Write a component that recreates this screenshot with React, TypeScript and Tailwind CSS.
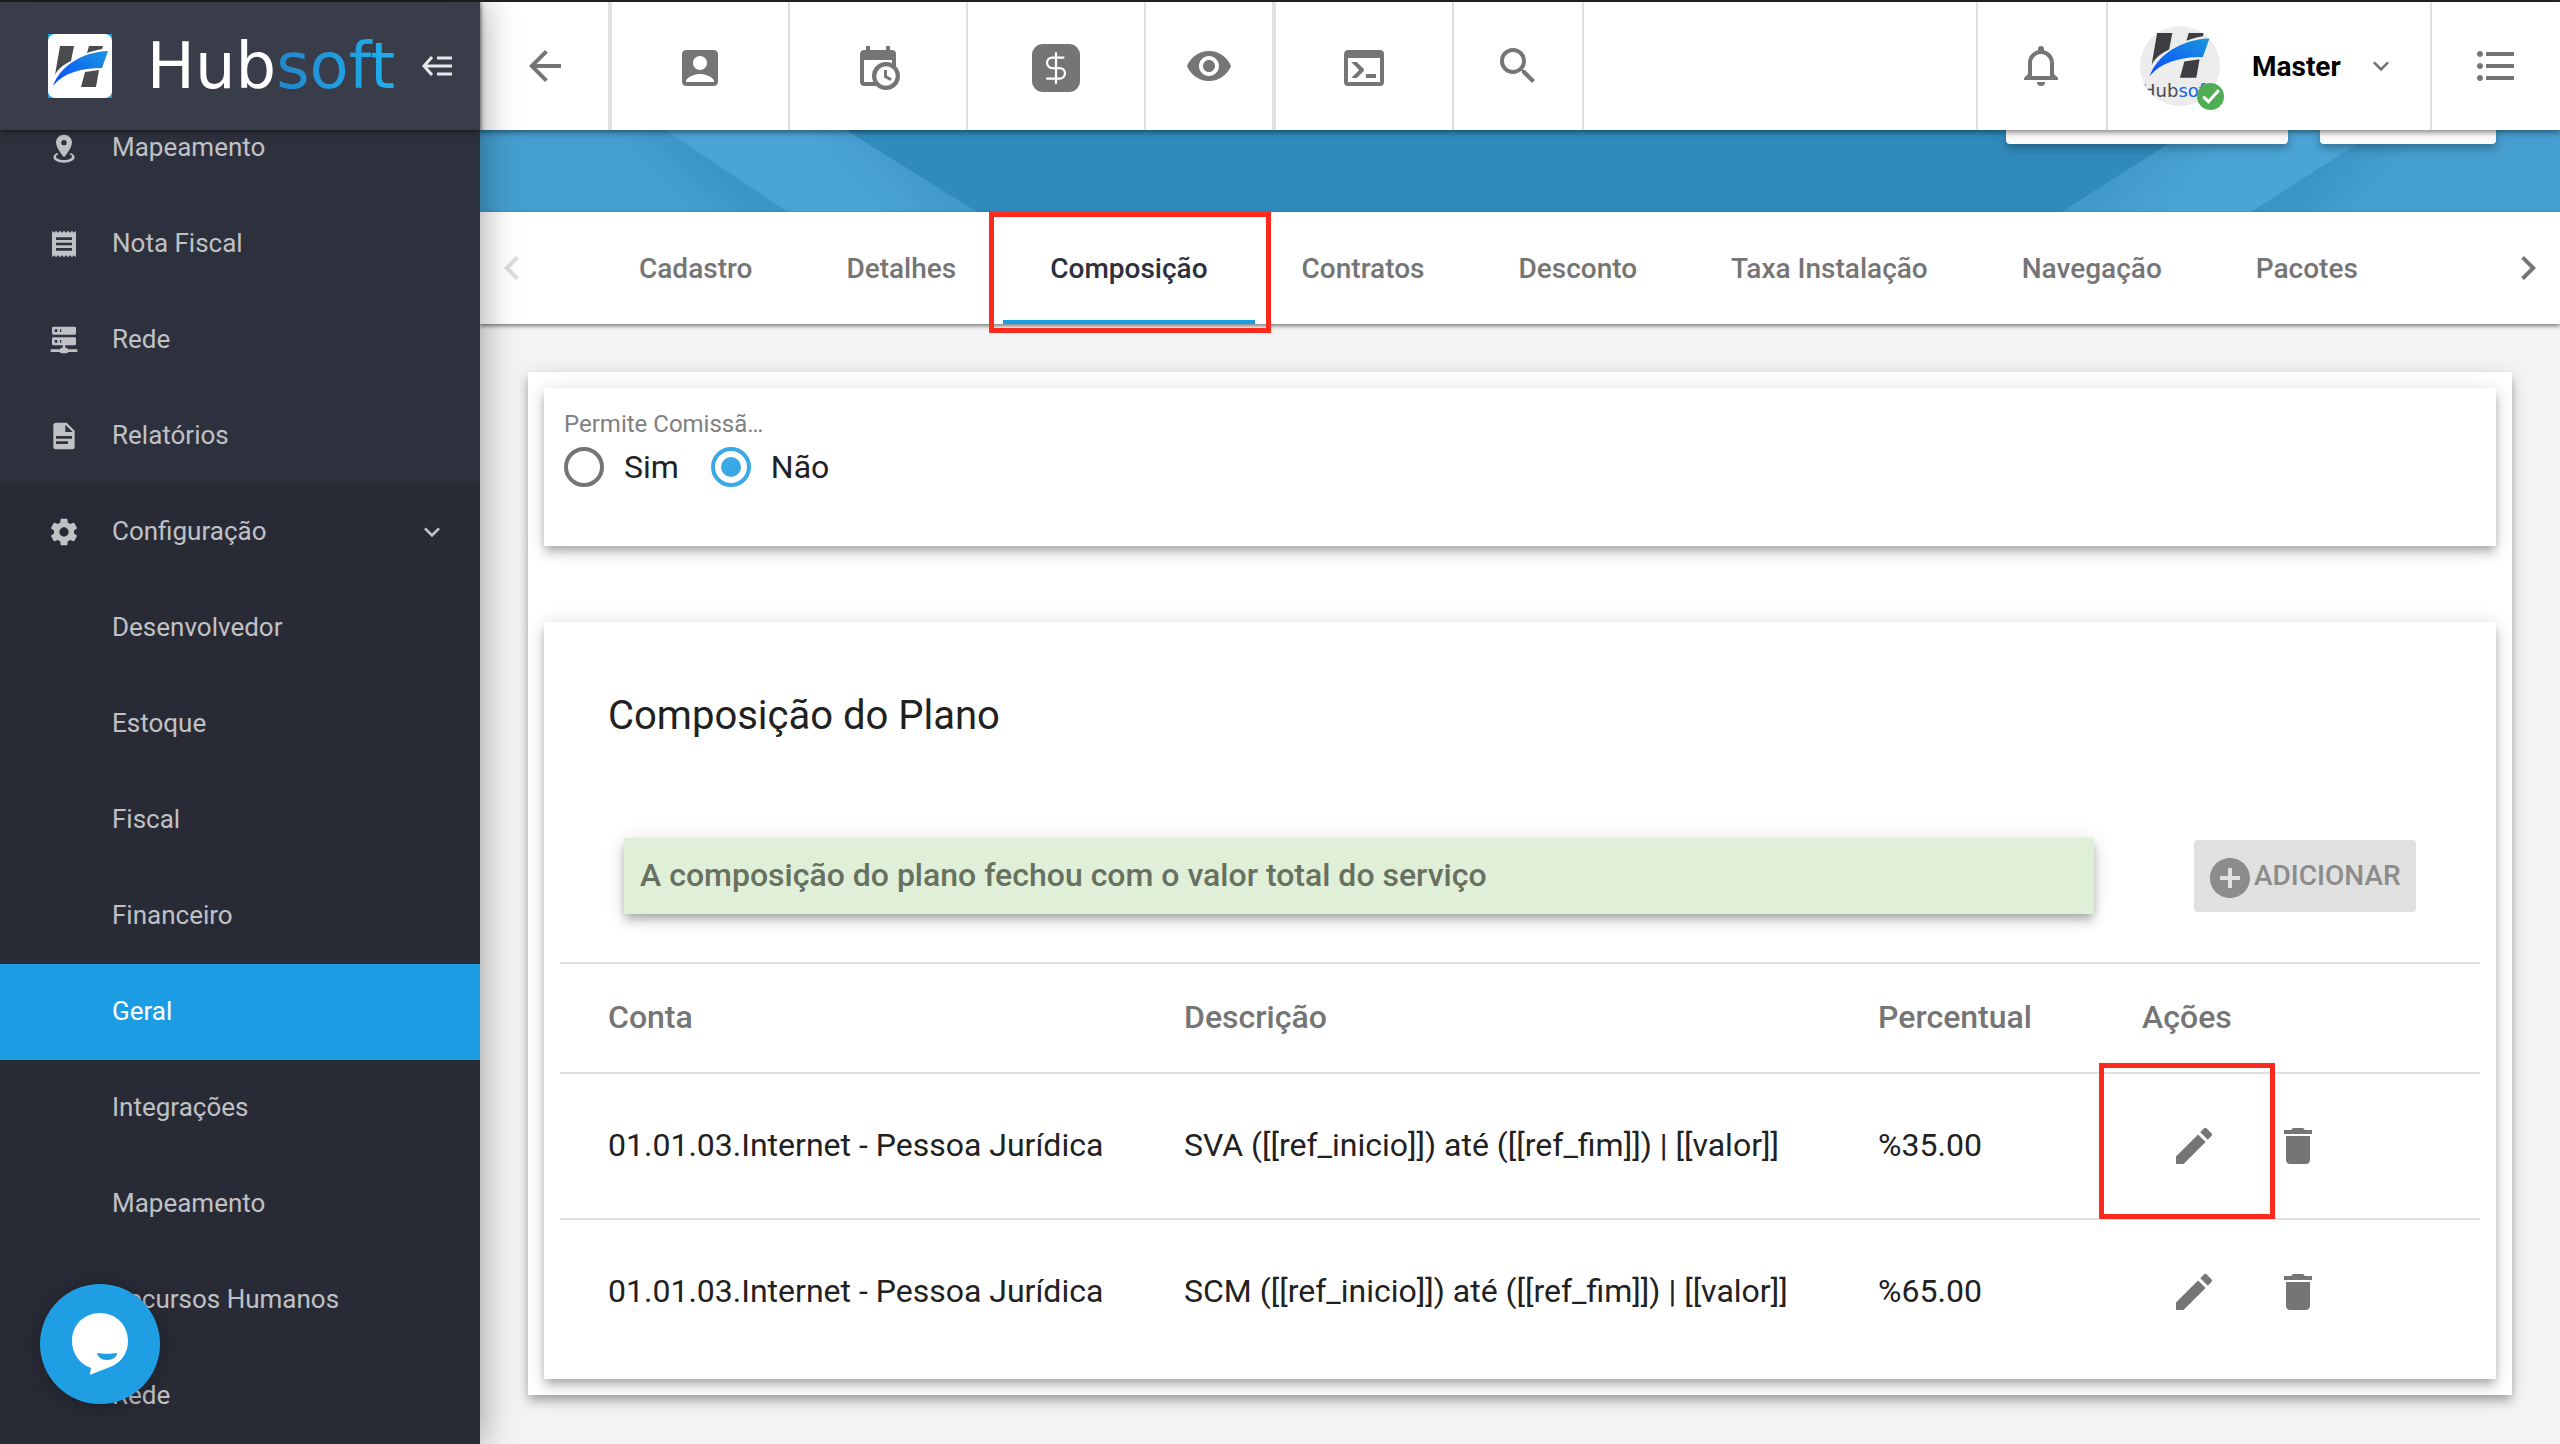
import { useState } from "react";
import type { ReactNode } from "react";
import { clsx } from "clsx";
import { DollarSign } from "lucide-react";
import {
  MdAccountBox,
  MdAddCircle,
  MdArrowBack,
  MdChevronLeft,
  MdChevronRight,
  MdDelete,
  MdEdit,
  MdFormatListBulleted,
  MdKeyboardArrowDown,
  MdReceipt,
  MdRemoveRedEye,
  MdSearch,
} from "react-icons/md";

// Material Design Icons that react-icons does not ship
const paths = {
  mapMarker:
    "M12,2C15.31,2 18,4.66 18,7.95C18,12.41 12,19 12,19C12,19 6,12.41 6,7.95C6,4.66 8.69,2 12,2M12,6A2,2 0 0,0 10,8A2,2 0 0,0 12,10A2,2 0 0,0 14,8A2,2 0 0,0 12,6M20,19C20,21.21 16.42,23 12,23C7.58,23 4,21.21 4,19C4,17.71 5.22,16.56 7.11,15.83L7.75,16.74C6.67,17.19 6,17.81 6,18.5C6,19.88 8.69,21 12,21C15.31,21 18,19.88 18,18.5C18,17.81 17.33,17.19 16.25,16.74L16.89,15.83C18.78,16.56 20,17.71 20,19Z",
  server:
    "M13,18H14A1,1 0 0,1 15,19H22V21H15A1,1 0 0,1 14,22H10A1,1 0 0,1 9,21H2V19H9A1,1 0 0,1 10,18H11V16H4A1,1 0 0,1 3,15V11A1,1 0 0,1 4,10H20A1,1 0 0,1 21,11V15A1,1 0 0,1 20,16H13V18M4,2H20A1,1 0 0,1 21,3V7A1,1 0 0,1 20,8H4A1,1 0 0,1 3,7V3A1,1 0 0,1 4,2M9,6H10V4H9V6M9,14H10V12H9V14M5,4V6H7V4H5M5,12V14H7V12H5Z",
  file: "M13,9H18.5L13,3.5V9M6,2H14L20,8V20A2,2 0 0,1 18,22H6C4.89,22 4,21.1 4,20V4C4,2.89 4.89,2 6,2M15,18V16H6V18H15M18,14V12H6V14H18Z",
  settings:
    "M12,15.5A3.5,3.5 0 0,1 8.5,12A3.5,3.5 0 0,1 12,8.5A3.5,3.5 0 0,1 15.5,12A3.5,3.5 0 0,1 12,15.5M19.43,12.97C19.47,12.65 19.5,12.33 19.5,12C19.5,11.67 19.47,11.34 19.43,11L21.54,9.37C21.73,9.22 21.78,8.95 21.66,8.73L19.66,5.27C19.54,5.05 19.27,4.96 19.05,5.05L16.56,6.05C16.04,5.66 15.5,5.32 14.87,5.07L14.5,2.42C14.46,2.18 14.25,2 14,2H10C9.75,2 9.54,2.18 9.5,2.42L9.13,5.07C8.5,5.32 7.96,5.66 7.44,6.05L4.95,5.05C4.73,4.96 4.46,5.05 4.34,5.27L2.34,8.73C2.21,8.95 2.27,9.22 2.46,9.37L4.57,11C4.53,11.34 4.5,11.67 4.5,12C4.5,12.33 4.53,12.65 4.57,12.97L2.46,14.63C2.27,14.78 2.21,15.05 2.34,15.27L4.34,18.73C4.46,18.95 4.73,19.03 4.95,18.95L7.44,17.94C7.96,18.34 8.5,18.68 9.13,18.93L9.5,21.58C9.54,21.82 9.75,22 10,22H14C14.25,22 14.46,21.82 14.5,21.58L14.87,18.93C15.5,18.67 16.04,18.34 16.56,17.94L19.05,18.95C19.27,19.03 19.54,18.95 19.66,18.73L21.66,15.27C21.78,15.05 21.73,14.78 21.54,14.63L19.43,12.97Z",
  calendarClock:
    "M15,13H16.5V15.82L18.94,17.23L18.19,18.53L15,16.69V13M19,8H5V19H9.67C9.24,18.09 9,17.07 9,16A7,7 0 0,1 16,9C17.07,9 18.09,9.24 19,9.67V8M5,21C3.89,21 3,20.1 3,19V5C3,3.89 3.89,3 5,3H6V1H8V3H16V1H18V3H19A2,2 0 0,1 21,5V11.1C22.24,12.36 23,14.09 23,16A7,7 0 0,1 16,23C14.09,23 12.36,22.24 11.1,21H5M16,11.15A4.85,4.85 0 0,0 11.15,16C11.15,18.68 13.32,20.85 16,20.85A4.85,4.85 0 0,0 20.85,16C20.85,13.32 18.68,11.15 16,11.15Z",
  console:
    "M20,19V7H4V19H20M20,3A2,2 0 0,1 22,5V19A2,2 0 0,1 20,21H4A2,2 0 0,1 2,19V5C2,3.89 2.9,3 4,3H20M13,17V15H18V17H13M9.58,13L5.57,9H8.4L11.7,12.3C12.09,12.69 12.09,13.33 11.7,13.72L8.42,17H5.59L9.58,13Z",
  bell: "M16,17H7V10.5C7,8 9,6 11.5,6C14,6 16,8 16,10.5M18,16V10.5C18,7.43 15.86,4.86 13,4.18V3.5A1.5,1.5 0 0,0 11.5,2A1.5,1.5 0 0,0 10,3.5V4.18C7.13,4.86 5,7.43 5,10.5V16L3,18V19H20V18M11.5,22A2,2 0 0,0 13.5,20H9.5A2,2 0 0,0 11.5,22Z",
};

const Icon = ({ d, className }: { d: string; className: string }) => (
  <svg viewBox="0 0 24 24" fill="currentColor" className={className} aria-hidden="true">
    <path d={d} />
  </svg>
);

const LogoMark = ({ id, bar }: { id: string; bar: string }) => (
  <>
    <defs>
      <linearGradient id={id} x1="0" y1="1" x2="1" y2="0">
        <stop offset="0" stopColor="#0a4bff" />
        <stop offset="1" stopColor="#1996dc" />
      </linearGradient>
    </defs>
    <path fill={bar} d="M12 12H26L23 27C15 31 10 35 7 41ZM41 12H55L54 15C49 16 44 17 39 19ZM37 38L51 36L48 53H33Z" />
    <path fill={`url(#${id})`} d="M5 52C12 32 34 18 60 17L54 34C33 34 15 39 5 52Z" />
  </>
);

const menu = [
  { label: "Mapeamento", icon: <Icon d={paths.mapMarker} className="size-8" /> },
  { label: "Nota Fiscal", icon: <MdReceipt className="size-8" /> },
  { label: "Rede", icon: <Icon d={paths.server} className="size-8" /> },
  { label: "Relatórios", icon: <Icon d={paths.file} className="size-8" /> },
];

const submenu = [
  "Desenvolvedor",
  "Estoque",
  "Fiscal",
  "Financeiro",
  "Geral",
  "Integrações",
  "Mapeamento",
  "Recursos Humanos",
  "Rede",
];

const Sidebar = () => (
  <aside className="relative z-20 w-[480px] shrink-0 bg-[#2d303d] text-[26px] text-[#c0c1c5] shadow-[0_0_36px_rgba(0,0,0,0.4)]">
    <div className="relative z-10 flex h-32 items-center bg-[#393c49] pl-12 shadow-[0_2px_6px_rgba(0,0,0,0.5)]">
      <div className="size-16 overflow-hidden bg-[#1c9de3]">
        <svg viewBox="0 0 64 64" className="size-16" aria-hidden="true">
          <rect width="64" height="64" rx="7" fill="#fff" />
          <LogoMark id="logo" bar="#4b4b4d" />
        </svg>
      </div>
      <div className="ml-6 w-[270px] text-center font-['DejaVu_Sans'] text-[64px] leading-none text-white">
        Hub
        <span className="bg-linear-to-r from-[#2387cc] to-[#1eb0ee] bg-clip-text text-transparent">soft</span>
      </div>
      <button type="button" aria-label="Recolher menu" className="ml-4">
        <svg viewBox="0 0 30 20" className="h-5 w-[30px]" fill="none" stroke="#e6e7ea" strokeWidth="3" aria-hidden="true">
          <path d="M10 1L2 10L10 19M2 10H30M15 2H30M15 18H30" />
        </svg>
      </button>
    </div>
    <nav className="-mt-[30px]">
      {menu.map((item) => (
        <a key={item.label} href="#" className="flex h-24 items-center gap-8 pl-12">
          {item.icon}
          <span className="pb-0.5">{item.label}</span>
        </a>
      ))}
      <div className="bg-[#282b36]">
        <a href="#" className="flex h-24 items-center gap-8 pr-8 pl-12">
          <Icon d={paths.settings} className="size-8" />
          <span className="flex-1 pb-0.5">Configuração</span>
          <MdKeyboardArrowDown className="size-8" />
        </a>
        {submenu.map((label) => (
          <a
            key={label}
            href="#"
            className={clsx("flex h-24 items-center pb-0.5 pl-28", label === "Geral" && "bg-[#1c9de3] text-white")}
          >
            {label}
          </a>
        ))}
      </div>
    </nav>
  </aside>
);

const ToolButton = ({ label, className, children }: { label: string; className: string; children: ReactNode }) => (
  <button
    type="button"
    aria-label={label}
    className={clsx("flex h-full items-center justify-center border-[#e0e0e0]", className)}
  >
    {children}
  </button>
);

const Toolbar = () => (
  <header className="relative z-10 flex h-32 items-center bg-white text-[#757575] shadow-[0_2px_6px_rgba(0,0,0,0.5)]">
    <ToolButton label="Voltar" className="w-[130px] border-x-2">
      <MdArrowBack className="size-12" />
    </ToolButton>
    <ToolButton label="Clientes" className="w-[180px] border-x-2 pt-1">
      <MdAccountBox className="size-12" />
    </ToolButton>
    <ToolButton label="Agenda" className="w-[178px] border-r-2 pt-1">
      <Icon d={paths.calendarClock} className="size-12" />
    </ToolButton>
    <ToolButton label="Financeiro" className="w-[178px] border-r-2 pt-1">
      <span className="flex size-12 items-center justify-center rounded-[11px] bg-[#757575] text-white">
        <DollarSign className="h-9 w-9" strokeWidth={1.5} />
      </span>
    </ToolButton>
    <ToolButton label="Visualizar" className="w-32 border-r-2">
      <MdRemoveRedEye className="size-12" />
    </ToolButton>
    <ToolButton label="Terminal" className="w-[180px] border-x-2 pt-1">
      <Icon d={paths.console} className="size-12" />
    </ToolButton>
    <ToolButton label="Pesquisar" className="w-[130px] border-r-2">
      <MdSearch className="size-12" />
    </ToolButton>
    <div className="flex-1" />
    <ToolButton label="Notificações" className="w-[130px] border-l-2">
      <Icon d={paths.bell} className="size-12" />
    </ToolButton>
    <button type="button" className="flex h-full w-[326px] items-center border-x-2 border-[#e0e0e0] pl-8">
      <span className="relative">
        <svg viewBox="0 0 80 80" className="size-20" aria-hidden="true">
          <clipPath id="avatar-clip">
            <circle cx="40" cy="40" r="40" />
          </clipPath>
          <g clipPath="url(#avatar-clip)">
            <rect width="80" height="80" fill="#ececec" />
            <g transform="translate(4 -6) scale(1.09)">
              <LogoMark id="avatar" bar="#3d3e41" />
            </g>
            <text x="2" y="71" fontSize="18" fontFamily="DejaVu Sans, sans-serif" fill="#4b4b4d">
              Hub<tspan fill="#1463f0">soft</tspan>
            </text>
          </g>
        </svg>
        <svg viewBox="0 0 26 26" className="absolute -right-1 -bottom-1 size-[27px]" aria-hidden="true">
          <circle cx="13" cy="13" r="13" fill="#4fae53" />
          <path d="M6 13L11 18L21 7" fill="none" stroke="#fff" strokeWidth="3" />
        </svg>
      </span>
      <span className="ml-8 pt-0.5 text-[28px] font-bold text-black">Master</span>
      <MdKeyboardArrowDown className="ml-6 size-8" />
    </button>
    <ToolButton label="Atalhos" className="w-32">
      <MdFormatListBulleted className="size-12" />
    </ToolButton>
  </header>
);

const Banner = () => (
  <div className="relative flex h-[82px] items-start justify-end gap-8 overflow-hidden bg-[#459fd0] pr-16">
    <svg viewBox="0 0 2080 82" preserveAspectRatio="none" className="absolute inset-0 size-full" aria-hidden="true">
      <defs>
        <linearGradient id="fold-left" gradientUnits="userSpaceOnUse" x1="205" y1="82" x2="247" y2="41">
          <stop offset="0" stopColor="#459fd0" />
          <stop offset="1" stopColor="#3a95c6" />
        </linearGradient>
        <linearGradient id="stripe-left" gradientUnits="userSpaceOnUse" x1="395" y1="82" x2="440" y2="41">
          <stop offset="0" stopColor="#4aa4d6" />
          <stop offset="1" stopColor="#429aca" />
        </linearGradient>
        <linearGradient id="stripe-right" gradientUnits="userSpaceOnUse" x1="1646" y1="41" x2="1690" y2="82">
          <stop offset="0" stopColor="#429aca" />
          <stop offset="1" stopColor="#4aa4d6" />
        </linearGradient>
        <linearGradient id="fold-right" gradientUnits="userSpaceOnUse" x1="1835" y1="41" x2="1879" y2="82">
          <stop offset="0" stopColor="#3a95c6" />
          <stop offset="1" stopColor="#459fd0" />
        </linearGradient>
      </defs>
      <path fill="url(#fold-left)" d="M0 0H185L308 82H0Z" />
      <path fill="url(#stripe-left)" d="M185 0H366L497 82H308Z" />
      <path fill="#308bbc" d="M366 0H1710L1582 82H497Z" />
      <path fill="url(#stripe-right)" d="M1710 0H1899L1771 82H1582Z" />
      <path fill="url(#fold-right)" d="M1899 0H2080V82H1771Z" />
    </svg>
    <button
      type="button"
      aria-label="Voltar para a lista"
      className="relative h-[14px] w-[282px] rounded-b bg-[#fafafa] shadow-[0_4px_10px_rgba(0,0,0,0.3)]"
    />
    <button
      type="button"
      aria-label="Salvar"
      className="relative h-[14px] w-44 rounded-b bg-[#fafafa] shadow-[0_4px_10px_rgba(0,0,0,0.3)]"
    />
  </div>
);

const tabs = [
  "Cadastro",
  "Detalhes",
  "Composição",
  "Contratos",
  "Desconto",
  "Taxa Instalação",
  "Navegação",
  "Pacotes",
];

const Tabs = () => (
  <div className="relative flex h-28 items-center bg-white text-[28px] font-medium text-[#757575] shadow-[0_2px_4px_rgba(0,0,0,0.5)]">
    <button type="button" aria-label="Abas anteriores" disabled className="flex w-16 justify-center text-[#dcdcdc]">
      <MdChevronLeft className="size-12" />
    </button>
    <div role="tablist" className="ml-12 flex h-full flex-1">
      {tabs.map((tab) => {
        const active = tab === "Composição";
        return (
          <button
            key={tab}
            type="button"
            role="tab"
            aria-selected={active}
            className={clsx(
              "relative border-b-4 px-[47px] pt-1.5 whitespace-nowrap",
              active ? "border-[#1c9de3] text-[#2d303d]" : "border-transparent"
            )}
          >
            {tab}
            {active && (
              <span className="pointer-events-none absolute top-0 -right-4 -bottom-[13px] -left-3.5 border-[5px] border-[#ff2a1c]" />
            )}
          </button>
        );
      })}
    </div>
    <button type="button" aria-label="Próximas abas" className="flex w-16 justify-center">
      <MdChevronRight className="size-12" />
    </button>
  </div>
);

const frame = "shadow-[0_4px_8px_-2px_rgba(0,0,0,0.2),0_8px_10px_0_rgba(0,0,0,0.14),0_2px_20px_0_rgba(0,0,0,0.12)]";

const CommissionCard = () => {
  const [value, setValue] = useState("Não");

  return (
    <section className={clsx("bg-white px-5 pt-5 pb-[58px]", frame)}>
      <fieldset>
        <legend className="text-2xl text-[#808080]">Permite Comissã…</legend>
        <div className="mt-1.5 flex items-center gap-8 text-[32px] leading-[42px] text-[#212121]">
          {["Sim", "Não"].map((option) => (
            <label key={option} className="flex items-center gap-5">
              <input
                type="radio"
                name="comissao"
                value={option}
                checked={value === option}
                onChange={() => setValue(option)}
                className="flex size-10 appearance-none items-center justify-center rounded-full border-4 border-[#757575] checked:border-[#3ba8e8] checked:before:size-5 checked:before:rounded-full checked:before:bg-[#3ba8e8]"
              />
              {option}
            </label>
          ))}
        </div>
      </fieldset>
    </section>
  );
};

const rows = [
  {
    conta: "01.01.03.Internet - Pessoa Jurídica",
    descricao: "SVA ([[ref_inicio]]) até ([[ref_fim]]) | [[valor]]",
    percentual: "%35.00",
    marked: true,
  },
  {
    conta: "01.01.03.Internet - Pessoa Jurídica",
    descricao: "SCM ([[ref_inicio]]) até ([[ref_fim]]) | [[valor]]",
    percentual: "%65.00",
    marked: false,
  },
];

const CompositionCard = () => (
  <section className={clsx("bg-white p-4", frame)}>
    <h2 className="px-12 pt-[50px] text-[40px] leading-[56px] text-[#212121]">Composição do Plano</h2>
    <div className="mt-[94px] mb-12 flex items-center px-16">
      <p
        className={clsx(
          "flex-1 bg-[#e0efd8] px-4 pb-0.5 text-[32px] leading-[74px] font-medium text-[#68705f]",
          frame
        )}
      >
        A composição do plano fechou com o valor total do serviço
      </p>
      <button
        type="button"
        disabled
        className="ml-[100px] flex h-[72px] w-[222px] items-center rounded bg-[#e0e0e0] pl-3 text-[28px] font-medium text-[#8c8c8c]"
      >
        <MdAddCircle className="mt-1 size-12" />
        ADICIONAR
      </button>
    </div>
    <table className="w-full table-fixed text-left text-[32px] text-[#212121]">
      <thead className="text-[#757575]">
        <tr className="h-[110px] border-t-2 border-[#e0e0e0]">
          <th className="w-[32.5%] pb-0.5 pl-12 font-medium">Conta</th>
          <th className="w-[36.15%] pb-0.5 font-medium">Descrição</th>
          <th className="w-[13.75%] pb-0.5 font-medium">Percentual</th>
          <th className="pb-0.5 font-medium">Ações</th>
        </tr>
      </thead>
      <tbody>
        {rows.map((row) => (
          <tr key={row.descricao} className="h-[146px] border-t-2 border-[#e0e0e0] last:h-36">
            <td className="pb-0.5 pl-12">{row.conta}</td>
            <td className="pb-0.5">{row.descricao}</td>
            <td className="pb-0.5">{row.percentual}</td>
            <td>
              <div className="flex gap-6 pl-3 text-[#757575]">
                <button type="button" aria-label="Editar" className="relative flex size-20 items-center justify-center">
                  <MdEdit className="size-12" />
                  {row.marked && (
                    <span className="pointer-events-none absolute -top-[43px] -right-[41px] -bottom-[33px] -left-[55px] border-[5px] border-[#ff2a1c]" />
                  )}
                </button>
                <button type="button" aria-label="Excluir" className="flex size-20 items-center justify-center">
                  <MdDelete className="size-12" />
                </button>
              </div>
            </td>
          </tr>
        ))}
      </tbody>
    </table>
  </section>
);

const ChatButton = () => (
  <button
    type="button"
    aria-label="Chat"
    className="fixed bottom-10 left-10 z-30 flex size-[120px] items-center justify-center rounded-full bg-[#1f9ee3] shadow-[0_2px_24px_rgba(0,0,0,0.3)]"
  >
    <svg viewBox="0 0 56 62" className="h-[62px] w-14" aria-hidden="true">
      <path
        fill="#fff"
        d="M28 0C12 0 0 12 0 28C0 41 8 51 19 55L18 61C18 62 19 62 20 61L38 54C49 50 56 40 56 28C56 12 44 0 28 0Z"
      />
      <path fill="#1f9ee3" d="M25 40C31 41 39 41 45 40C45 44 41 47 35 47C29 47 26 44 25 40Z" />
    </svg>
  </button>
);

const App = () => (
  <div className="flex min-h-screen border-t-2 border-[#262424] bg-[#f4f4f4] font-[Roboto,sans-serif]">
    <Sidebar />
    <div className="min-w-0 flex-1">
      <Toolbar />
      <Banner />
      <Tabs />
      <main className="px-12 py-12">
        <div className={clsx("flex flex-col gap-[76px] bg-white p-4", frame)}>
          <CommissionCard />
          <CompositionCard />
        </div>
      </main>
    </div>
    <ChatButton />
  </div>
);

export default App;
